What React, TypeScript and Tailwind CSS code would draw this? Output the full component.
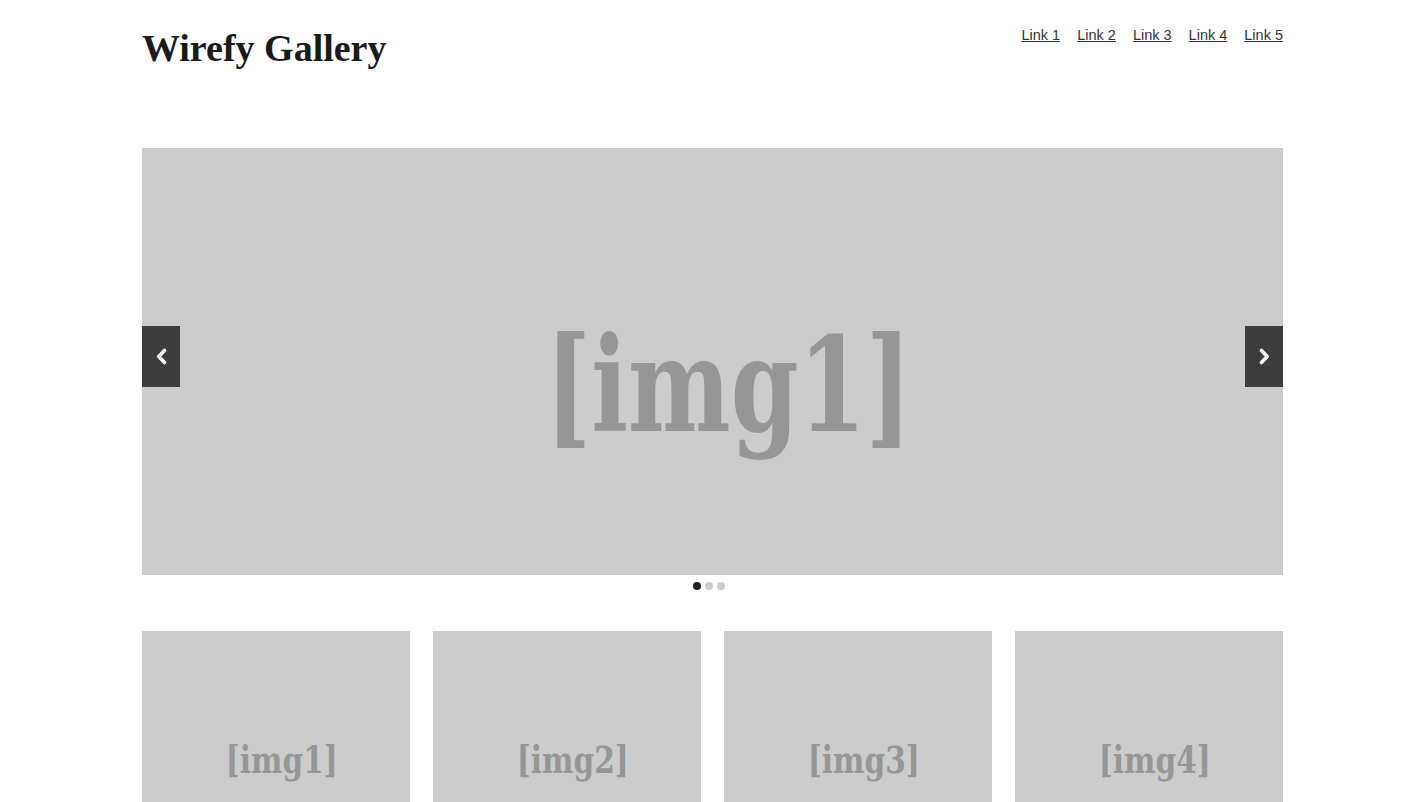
const links = ['Link 1', 'Link 2', 'Link 3', 'Link 4', 'Link 5'];
const thumbs = ['[img1]', '[img2]', '[img3]', '[img4]'];

function Chevron({ dir }: { dir: 'left' | 'right' }) {
  return (
    <svg width="11" height="17" viewBox="0 0 11 17" fill="none">
      <path
        d={dir === 'left' ? 'M8.5 2.5 L2.8 8.5 L8.5 14.5' : 'M2.5 2.5 L8.2 8.5 L2.5 14.5'}
        stroke="white"
        strokeWidth="3.6"
        strokeLinecap="round"
        strokeLinejoin="round"
      />
    </svg>
  );
}

export default function App() {
  return (
    <div className="min-h-screen bg-white">
      <div className="mx-auto w-[1141px]">
        {/* Header */}
        <header className="flex items-start justify-between pt-[26px]">
          <h1 className="font-['Liberation_Serif',serif] text-[38px] font-bold leading-[44px] text-[#1a1a1a]">
            Wirefy Gallery
          </h1>
          <nav className="mt-[-1px] flex gap-[17px] font-['Liberation_Sans',Arial,sans-serif] text-[14.5px] text-[#333]">
            {links.map((l) => (
              <a key={l} href="#" className="underline">
                {l}
              </a>
            ))}
          </nav>
        </header>

        {/* Slider */}
        <div className="relative mt-[78px] flex h-[427px] items-center justify-center overflow-hidden bg-[#cccccc]">
          <span className="ml-[32px] mt-[48px] inline-block scale-x-[0.74] font-['DejaVu_Serif',serif] text-[131px] font-bold leading-none text-[#969696]">
            [img1]
          </span>
          <button className="absolute left-0 top-[178px] flex h-[61px] w-[38px] items-center justify-center bg-[#3d3d3d]">
            <Chevron dir="left" />
          </button>
          <button className="absolute right-0 top-[178px] flex h-[61px] w-[38px] items-center justify-center bg-[#3d3d3d]">
            <Chevron dir="right" />
          </button>
        </div>
        <div className="mt-[7px] flex justify-center gap-[4px] pr-[7px]">
          <span className="h-[8px] w-[8px] rounded-full bg-[#222]" />
          <span className="h-[8px] w-[8px] rounded-full bg-[#ccc]" />
          <span className="h-[8px] w-[8px] rounded-full bg-[#ccc]" />
        </div>

        {/* Thumbnails */}
        <div className="mt-[41px] grid grid-cols-4 gap-[23px]">
          {thumbs.map((t) => (
            <div key={t} className="flex h-[258px] items-center justify-center bg-[#cccccc]">
              <span className="ml-[11px] inline-block scale-x-[0.78] font-['DejaVu_Serif',serif] text-[38px] font-bold leading-none text-[#969696]">
                {t}
              </span>
            </div>
          ))}
        </div>
      </div>
    </div>
  );
}
